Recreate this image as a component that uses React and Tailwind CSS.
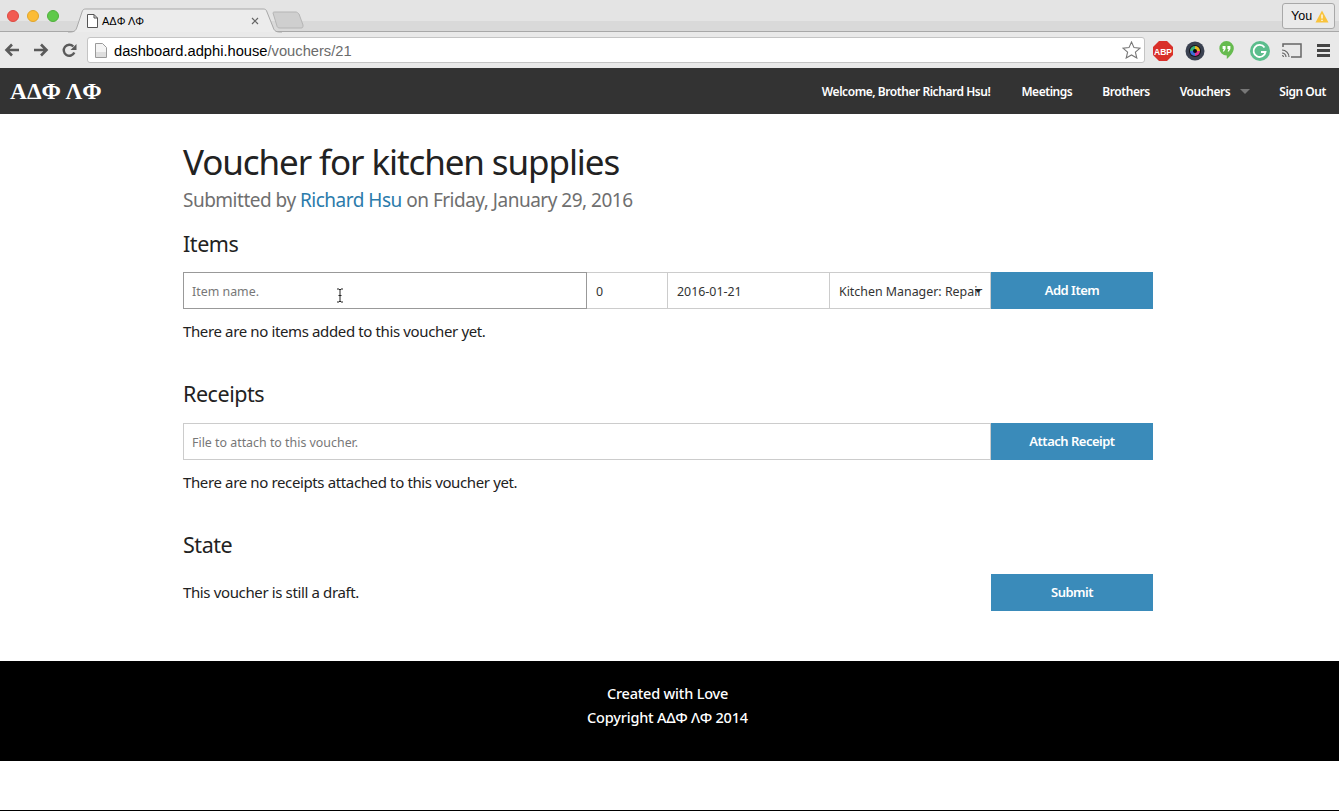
import React from 'react';

const sans = 'font-["Noto_Sans",sans-serif]';

const TrafficLight = ({ color, border }) => (
  <span className="w-3 h-3 rounded-full border" style={{ backgroundColor: color, borderColor: border }} />
);

// Browser tab strip with the active tab and the empty "new tab" button
const TabStrip = () => (
  <div className="relative h-8 bg-[#e4e4e4] flex items-start shrink-0">
    <div className="absolute left-0 right-0 top-[21px] h-[11px] bg-[#d9d9d9] border-b border-[#a8a8a8]" />
    <div className="relative flex gap-[8px] pl-[7px] pt-[10px]">
      <TrafficLight color="#f25b52" border="#dd4a42" />
      <TrafficLight color="#fcbc36" border="#e0a52a" />
      <TrafficLight color="#5fc94a" border="#50b03c" />
    </div>
    <svg className="absolute left-[68px] top-[8px]" width="240" height="25" viewBox="0 0 240 25">
      <path d="M0 24 H2 C7 24 8 22 9 19 L14 4 C15 1 16 1 19 1 H194 C197 1 198 1 199 4 L205 19 C206 22 207 24 212 24 H214" fill="#ececec" stroke="#a8a8a8" strokeWidth="1" />
      <path d="M205 5 C205 4 206 4 207 4 H228 C229 4 230 5 231 6 L235 17 C235 19 235 20 233 20 H212 C210 20 209 19 209 18 Z" fill="#cfcfcf" stroke="#b5b5b5" strokeWidth="1" />
    </svg>
    <svg className="absolute left-[87px] top-[14px]" width="11" height="14" viewBox="0 0 11 14">
      <path d="M0.5 0.5 H7 L10.5 4 V13.5 H0.5 Z M7 0.5 V4 H10.5" fill="#fff" stroke="#555" strokeWidth="1" />
    </svg>
    <span className="absolute left-[102px] top-[14px] text-[11px] leading-[15px] text-black font-['Liberation_Sans',sans-serif]">ΑΔΦ ΛΦ</span>
    <svg className="absolute left-[251px] top-[17px]" width="8" height="8" viewBox="0 0 8 8">
      <path d="M1 1 L7 7 M7 1 L1 7" stroke="#666" strokeWidth="1.2" />
    </svg>
    <div className="absolute right-[4px] top-[3px] w-[53px] h-[26px] border border-[#a8a8a8] rounded-[3px] bg-[#eaeaea] flex items-center pl-[8px] gap-[3px]">
      <span className="text-[12.5px] text-black font-['Liberation_Sans',sans-serif]">You</span>
      <svg width="14" height="13" viewBox="0 0 14 13">
        <path d="M7 0.5 L13.5 12.5 H0.5 Z" fill="#f9c33c" />
        <path d="M7 4.5 V8.5 M7 9.8 V11" stroke="#fff" strokeWidth="1.3" />
      </svg>
    </div>
  </div>
);

// Toolbar with nav buttons, address bar and extension icons
const Toolbar = () => (
  <div className="h-[36px] bg-[#e9e9e9] flex items-center shrink-0">
    <div className="flex items-center gap-[13px] pl-[4px] w-[87px]">
      <svg width="16" height="14" viewBox="0 0 16 14">
        <path d="M15 7 H3 M8 1.5 L2.5 7 L8 12.5" fill="none" stroke="#5a5a5a" strokeWidth="2.6" />
      </svg>
      <svg width="16" height="14" viewBox="0 0 16 14">
        <path d="M1 7 H13 M8 1.5 L13.5 7 L8 12.5" fill="none" stroke="#5a5a5a" strokeWidth="2.6" />
      </svg>
      <svg width="15" height="15" viewBox="0 0 15 15">
        <path d="M12.3 9.5 A5.5 5.5 0 1 1 11.3 3.5" fill="none" stroke="#5a5a5a" strokeWidth="2.4" />
        <path d="M14.5 1 V7 H8.5 Z" fill="#5a5a5a" />
      </svg>
    </div>
    <div className="w-[1058px] h-[26px] bg-white border border-[#c4c4c4] rounded-[3px] flex items-center relative">
      <svg className="ml-[7px]" width="12" height="15" viewBox="0 0 12 15">
        <path d="M0.5 0.5 H7.5 L11.5 4.5 V14.5 H0.5 Z" fill="#f4f4f4" stroke="#9a9a9a" />
        <path d="M1 9 H11 V14 H1 Z" fill="#dedede" />
      </svg>
      <span className="ml-[7px] pt-[1px] text-[14.7px] leading-[20px] text-black font-['Liberation_Sans',sans-serif]">
        dashboard.adphi.house<span className="text-[#6b6b6b]">/vouchers/21</span>
      </span>
      <svg className="absolute right-[3px] top-[3px]" width="19" height="18" viewBox="0 0 19 18">
        <path d="M9.5 1 L12 6.6 L18 7.2 L13.4 11.2 L14.8 17 L9.5 14 L4.2 17 L5.6 11.2 L1 7.2 L7 6.6 Z" fill="#fff" stroke="#777" strokeWidth="1.1" />
      </svg>
    </div>
    <div className="relative flex-1 h-full">
      <svg className="absolute left-[8px] top-[9px]" width="20" height="20" viewBox="0 0 20 20">
        <path d="M6 0 H14 L20 6 V14 L14 20 H6 L0 14 V6 Z" fill="#d9302a" />
        <text x="10" y="13.5" textAnchor="middle" fontSize="8.5" fontWeight="700" fill="#fff" fontFamily="Liberation Sans">ABP</text>
      </svg>
      <svg className="absolute left-[40px] top-[9px]" width="20" height="20" viewBox="0 0 20 20">
        <circle cx="10" cy="10" r="9.5" fill="#3a4150" />
        <circle cx="10" cy="10" r="6" fill="#14161c" />
        <path d="M10 5 A5 5 0 0 1 15 10 L10 10 Z" fill="#e8b91f" />
        <path d="M15 10 A5 5 0 0 1 10 15 L10 10 Z" fill="#d8318f" />
        <path d="M10 15 A5 5 0 0 1 5 10 L10 10 Z" fill="#3a6fd8" />
        <path d="M5 10 A5 5 0 0 1 10 5 L10 10 Z" fill="#35b27a" />
        <circle cx="10" cy="10" r="2" fill="#0a0a0a" />
      </svg>
      <svg className="absolute left-[74px] top-[9px]" width="15" height="20" viewBox="0 0 15 20">
        <path d="M7.5 0 A7.3 7.3 0 0 1 14.8 7.3 C14.8 11.5 11 15.5 7.8 18 V14.6 A7.3 7.3 0 0 1 7.5 0 Z" fill="#66bb4f" />
        <path d="M3.6 5 H6.6 V8 L5 10.4 H3.8 L4.8 8 H3.6 Z M8.4 5 H11.4 V8 L9.8 10.4 H8.6 L9.6 8 H8.4 Z" fill="#fff" />
      </svg>
      <svg className="absolute left-[105px] top-[9px]" width="20" height="20" viewBox="0 0 20 20">
        <circle cx="10" cy="10" r="10" fill="#5bbd8c" />
        <path d="M14.5 6.5 A6 6 0 1 0 15.5 11 H11" fill="none" stroke="#fff" strokeWidth="1.8" />
      </svg>
      <svg className="absolute left-[137px] top-[11px]" width="20" height="15" viewBox="0 0 20 15">
        <path d="M1 4 V1 H19 V14 H9" fill="none" stroke="#666" strokeWidth="1.5" />
        <path d="M0 7 A7 7 0 0 1 7 14 M0 10 A4 4 0 0 1 4 14 M0 12.5 A1.5 1.5 0 0 1 1.5 14" fill="none" stroke="#666" strokeWidth="1.2" />
      </svg>
      <div className="absolute left-[172px] top-[12px] flex flex-col gap-[2px]">
        <span className="w-[13px] h-[3px] bg-[#444]" />
        <span className="w-[13px] h-[3px] bg-[#444]" />
        <span className="w-[13px] h-[3px] bg-[#444]" />
      </div>
    </div>
  </div>
);

const NavLink = ({ children, className }) => (
  <span className={`text-[12px] leading-[16px] font-semibold text-white tracking-[-0.45px] ${className}`}>{children}</span>
);

const Navbar = () => (
  <nav className="h-[46px] bg-[#333333] flex items-center justify-between pl-[10px] pr-[13px] pb-[1px] shrink-0">
    <span className="text-[23.4px] leading-[30px] font-bold text-white font-['Liberation_Serif',serif]">ΑΔΦ ΛΦ</span>
    <div className="flex items-center pt-[2px]">
      <NavLink className="">Welcome, Brother Richard Hsu!</NavLink>
      <NavLink className="ml-[31px]">Meetings</NavLink>
      <NavLink className="ml-[30px]">Brothers</NavLink>
      <NavLink className="ml-[30px]">Vouchers</NavLink>
      <span className="ml-[10px] w-0 h-0 border-x-[5px] border-x-transparent border-t-[5px] border-t-[#777]" />
      <NavLink className="ml-[29px]">Sign Out</NavLink>
    </div>
  </nav>
);

const fieldClass = 'h-[37px] bg-white border pt-[4px] pr-2 text-[12.4px] text-[#333] flex items-center whitespace-nowrap overflow-hidden';

const SubmitButton = ({ children }) => (
  <button className="w-[162px] h-[37px] bg-[#3a8bba] text-white text-[13px] font-semibold tracking-[-0.5px] shrink-0">
    {children}
  </button>
);

const Section = ({ title, children }) => (
  <section>
    <h2 className="text-[21.5px] leading-[30px] text-[#222] tracking-[-0.45px]">{title}</h2>
    {children}
  </section>
);

const Note = ({ children }) => (
  <p className="text-[15px] leading-[22px] text-[#222] tracking-[-0.37px]">{children}</p>
);

export default function App() {
  return (
    <div className={`${sans} min-h-[811px] bg-white flex flex-col border-b border-black`}>
      <TabStrip />
      <Toolbar />
      <Navbar />

      <main className="w-[970px] ml-[183px] h-[547px] pt-[26px] shrink-0">
        <h1 className="text-[35px] leading-[44px] text-[#222] tracking-[-1.1px]">Voucher for kitchen supplies</h1>
        <p className="pt-[2px] text-[19px] leading-[28px] text-[#6f6f6f] tracking-[-0.5px] mb-[15px]">
          Submitted by <span className="text-[#2b7bab]">Richard Hsu</span> on Friday, January 29, 2016
        </p>

        <Section title="Items">
          <div className="flex mt-[13px] relative">
            <div className={`${fieldClass} pl-2 w-[404px] border-[#999999] text-[#777] relative`}>
              Item name.
              <svg className="absolute left-[152px] top-[15px]" width="8" height="15" viewBox="0 0 8 15">
                <path d="M1 1 H3 L4 2 L5 1 H7 M4 2 V13 M1 14 H3 L4 13 L5 14 H7 M2.5 7.5 H5.5" fill="none" stroke="#222" strokeWidth="1" />
              </svg>
            </div>
            <div className={`${fieldClass} pl-[9px] w-[81px] border-l-0 border-[#cccccc]`}>0</div>
            <div className={`${fieldClass} pl-[9px] w-[162px] border-l-0 border-[#cccccc]`}>2016-01-21</div>
            <div className={`${fieldClass} pl-[9px] w-[161px] border-l-0 border-[#cccccc] relative`}>
              Kitchen Manager: Repair
              <span className="absolute right-[9px] top-[16px] w-0 h-0 border-x-[3px] border-x-transparent border-t-[4px] border-t-[#222]" />
            </div>
            <SubmitButton>Add Item</SubmitButton>
          </div>
          <div className="mt-[11px] mb-[37px]"><Note>There are no items added to this voucher yet.</Note></div>
        </Section>

        <Section title="Receipts">
          <div className="flex mt-[14px]">
            <div className={`${fieldClass} pl-2 flex-1 border-[#cccccc] text-[#777]`}>File to attach to this voucher.</div>
            <SubmitButton>Attach Receipt</SubmitButton>
          </div>
          <div className="mt-[11px] mb-[37px]"><Note>There are no receipts attached to this voucher yet.</Note></div>
        </Section>

        <Section title="State">
          <div className="flex items-center justify-between mt-[14px]">
            <div className="pb-[2px]"><Note>This voucher is still a draft.</Note></div>
            <SubmitButton>Submit</SubmitButton>
          </div>
        </Section>
      </main>

      <footer className="h-[100px] bg-black text-white text-center text-[14.5px] leading-[24px] font-medium tracking-[-0.2px] pt-[20px] pr-[4px] shrink-0">
        <p>Created with Love</p>
        <p>Copyright ΑΔΦ ΛΦ 2014</p>
      </footer>
    </div>
  );
}
